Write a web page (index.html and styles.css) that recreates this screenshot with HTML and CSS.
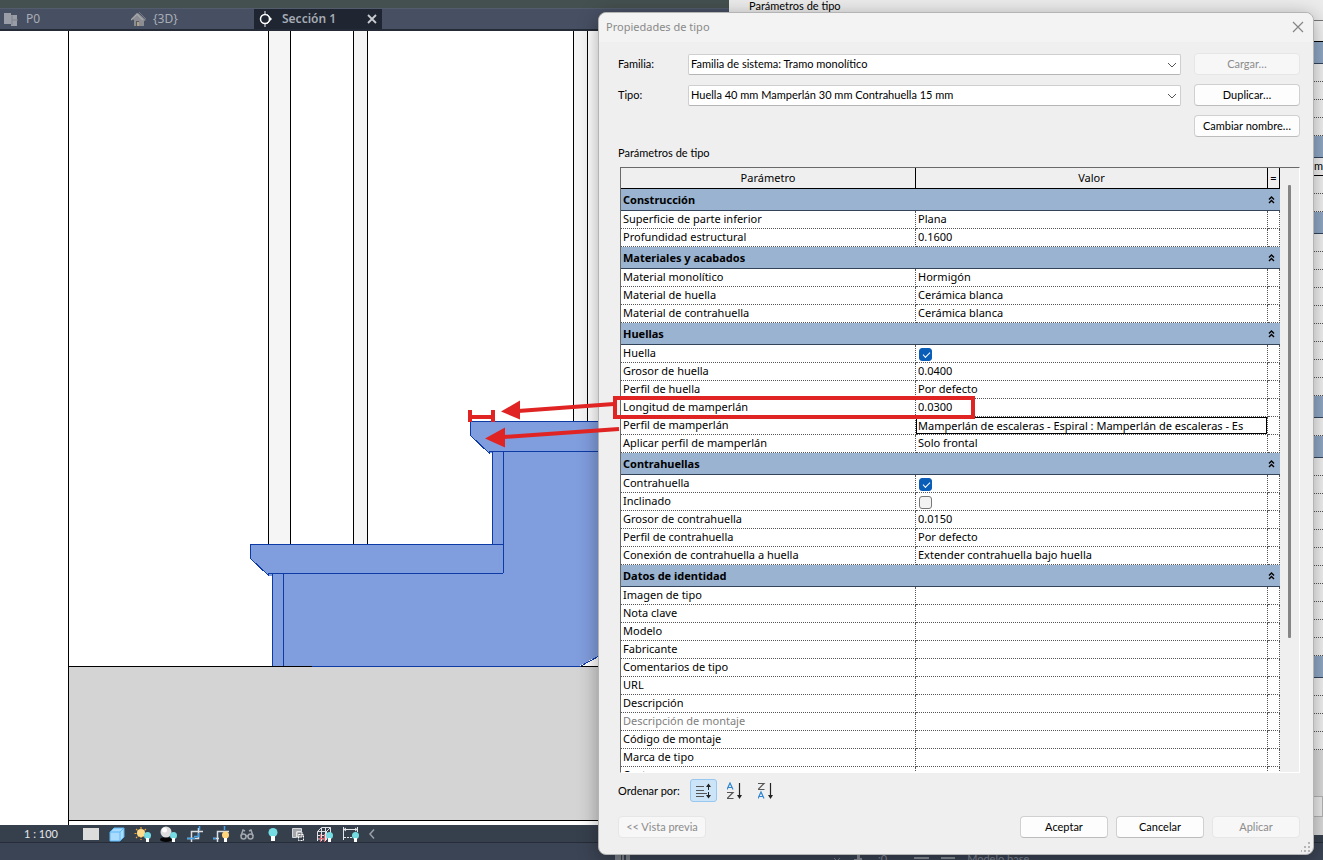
FILE: index.html
```html
<!DOCTYPE html>
<html lang="es">
<head>
<meta charset="utf-8">
<title>Propiedades de tipo</title>
<link rel="stylesheet" href="styles.css">
</head>
<body>
<div class="app">
  <div class="ribbon"></div>
  <nav class="tabs">
    <a class="tab" href="#p0">
      <svg width="16" height="16" viewBox="0 0 16 16"><path d="M0 2h7v2h6v11H7v-2H0z" fill="#9a9da5"/><path d="M8 4.500v9M8 9h6" stroke="#7d818c"/></svg>
      <span>P0</span>
    </a>
    <a class="tab" href="#3d">
      <svg width="16" height="16" viewBox="0 0 16 16"><path d="M1 8l6-6 8 7-2 1v5H3V9z" fill="#8b8d93"/><path d="M0 9l6-6 6 6" fill="none" stroke="#a5a6aa" stroke-width="1.500"/><path d="M8 1l7 7" stroke="#707580"/><path d="M5 10h3v5H5z" fill="#5c5a55"/><path d="M6 11h2v4H6z" fill="#aaa28c"/></svg>
      <span>{3D}</span>
    </a>
    <a class="tab tab-active" href="#seccion">
      <svg width="18" height="16" viewBox="0 0 18 16"><path d="M7 0v16" stroke="#eee"/><path d="M9 3l5 5-5 5z" fill="#fff"/><circle cx="7" cy="8" r="4.500" fill="#1f2631" stroke="#fff" stroke-width="1.500"/></svg>
      <span>Sección 1</span>
      <svg class="tab-close" width="10" height="10" viewBox="0 0 10 10"><path d="M1 1l8 8M9 1L1 9" stroke="#c9ccd1" stroke-width="1.800"/></svg>
    </a>
  </nav>

  <main class="canvas">
    <svg class="drawing" width="100%" height="100%">
      <g transform="translate(0 -31)" shape-rendering="crispEdges">
        <path d="M268 31h23v513h-23zM353 31h15v513h-15zM573 31h15v390h-15z" fill="#f5f5f5"/>
        <path d="M268.500 31v513M290.500 31v513M353.500 31v513M367.500 31v513M573.500 31v390M587.500 31v390" stroke="#000"/>
        <rect x="69" y="667" width="100%" height="153" fill="#d4d4d4"/>
        <path d="M68.500 31v794M68 666.500h1255M68 820.500h1255" stroke="#000"/>
        <path d="M470 421h270v160L579 666H272v-90h-4l-18-18v-14h242v-91h-2l-20-18z" fill="#809ddd"/>
        <path d="M700 421.500H470.500v14l19 18v-2H700M492.500 451v93M503.500 451v122M503 544.500H250.500v14l18 17v-2H503M272.500 573v93M283.500 573v93M312 666.500h268l60-33" fill="none" stroke="#0d3aa5"/>
      </g>
    </svg>
  </main>

  <div class="viewbar">
    <span class="scale">1 : 100</span>
    <svg viewBox="0 0 26 18"><path d="M5 3h16v12H5z" fill="#dcdcdc"/></svg>
    <svg viewBox="0 0 26 18"><path d="M6 7l4-4h10v9l-4 4H6z" fill="#a9dcff"/><path d="M6 7h10v9M16 7l4-4M6 7l4-4h10v9l-4 4H6z" fill="none" stroke="#5ab6f5"/></svg>
    <svg viewBox="0 0 26 18"><path d="M11 2v13M4.500 8.500h13M6 4l10 9M16 4L6 13" stroke="#eda83c" stroke-width="1.200" stroke-dasharray="2 1"/><circle cx="11" cy="8" r="4" fill="#ffdb8a"/><circle cx="17.500" cy="10.500" r="3.500" fill="#74dce2"/><path d="M16 13h3v4h-3z" fill="#fff"/></svg>
    <svg viewBox="0 0 26 18"><ellipse cx="10" cy="14.500" rx="6" ry="2.500" fill="#050505"/><circle cx="10" cy="7" r="5.500" fill="#dedede"/><circle cx="8.500" cy="5" r="2.500" fill="#fff"/><circle cx="17.500" cy="10.500" r="3.500" fill="#74dce2"/><path d="M16 13h3v4h-3z" fill="#fff"/></svg>
    <svg viewBox="0 0 26 18"><path d="M9.500 17V6.500H21M5 13.500h11.500V3" fill="none" stroke="#dcdfe3" stroke-width="1.500"/><path d="M5 13.500h8M12 11.500h4.500V8M17.500 1v4" fill="none" stroke="#45a5ec" stroke-width="1.500"/></svg>
    <svg viewBox="0 0 26 18"><path d="M9.500 17V6.500H21M5 13.500h6" fill="none" stroke="#dcdfe3" stroke-width="1.500"/><path d="M5 13.500h3M16.500 1v4" fill="none" stroke="#45a5ec" stroke-width="1.500"/><circle cx="17.500" cy="10" r="3.500" fill="#ffd47d"/><path d="M16 13h3v4h-3z" fill="#fff"/></svg>
    <svg viewBox="0 0 26 18"><g fill="none" stroke="#a3a6ac" stroke-width="1.500"><circle cx="9.500" cy="11.500" r="2.500"/><circle cx="16.500" cy="11.500" r="2.500"/><path d="M7 11l2-6 2 1M19 11l-2-6-2 1M12 11h2"/></g></svg>
    <svg viewBox="0 0 26 18"><circle cx="13" cy="7.500" r="4.500" fill="#74dce2"/><path d="M11 11h4v5h-4z" fill="#fff"/></svg>
    <svg viewBox="0 0 26 18"><path d="M6.500 3.500h9v3h-5v6h-4z" fill="#a4a6aa" stroke="#d5d7da"/><path d="M11 7h5v5h-5z" fill="#7c7f84" stroke="#eee"/><path d="M12.500 9.500h5v6h-5z" fill="none" stroke="#fff" stroke-dasharray="2 1"/></svg>
    <svg viewBox="0 0 26 18"><path d="M5.500 16V6.500l4-4h9V8M5.500 6.500h9l4-4M9.500 3v13M13.500 3v13M5 10.500h12M5 14h10M14.500 6v9" fill="none" stroke="#dfe1e4"/><path d="M8.500 9v8M12.500 9v8M7 13.500h6" stroke="#e2606d"/><circle cx="17.500" cy="10.500" r="3.500" fill="#74dce2"/><path d="M16 13h3v4h-3z" fill="#fff"/></svg>
    <svg viewBox="0 0 26 18"><path d="M5.500 2v13M19.500 2v5M5 4.500h15M8 3L6 4.500 8 6M17 3l2 1.500L17 6" fill="none" stroke="#e4e6e9"/><path d="M6 12.500h11" stroke="#e4e6e9" stroke-dasharray="2 1"/><circle cx="17.500" cy="10.500" r="3.500" fill="#74dce2"/><path d="M16 13h3v4h-3z" fill="#fff"/></svg>
    <svg class="more" viewBox="0 0 16 18"><path d="M10 4.500L6 9l4 4.500" fill="none" stroke="#9a9fa8" stroke-width="1.500"/></svg>
  </div>
  <div class="statusbar">
    <svg width="20" height="14" viewBox="0 0 20 14"><path d="M2 4h6v5H2zM9 4h2v9H9zM13 4h4v9h-4z" fill="#7f858e"/></svg>
    <svg class="status-caret" width="10" height="14" viewBox="0 0 10 14"><path d="M2 7l3 3 3-3" fill="none" stroke="#7f858e"/></svg>
    <svg class="status-person" width="10" height="14" viewBox="0 0 10 14"><path d="M4 3h3v4h2v3H1V8h3z" fill="#8a9098"/></svg>
    <span class="status-count">:0</span>
    <svg class="status-icons" width="44" height="14" viewBox="0 0 44 14"><path d="M1 7h15M1 11h15M28 7h14M32 11h10" stroke="#8a9098" stroke-width="2"/></svg>
    <span>Modelo base</span>
  </div>
</div>

<section class="back-window">
  <h2 class="back-title">Parámetros de tipo</h2>
  <div class="back-table">
    <div class="b-head"></div>
    <div class="b-group"></div><div class="b-row"></div><div class="b-row"></div><div class="b-row"></div><div class="b-row"></div>
    <div class="b-group"></div><div class="b-row b-selected">m</div><div class="b-row"></div><div class="b-row"></div>
    <div class="b-group"></div><div class="b-row"></div><div class="b-row"></div><div class="b-row"></div><div class="b-row"></div><div class="b-row"></div><div class="b-row"></div><div class="b-row"></div><div class="b-row"></div><div class="b-row"></div>
    <div class="b-group"></div><div class="b-row"></div>
    <div class="b-group"></div><div class="b-row"></div><div class="b-row"></div><div class="b-row"></div><div class="b-row"></div><div class="b-row"></div><div class="b-row"></div><div class="b-row"></div><div class="b-row"></div><div class="b-row"></div><div class="b-row"></div><div class="b-row"></div>
    <div class="b-group"></div><div class="b-row"></div><div class="b-row"></div><div class="b-row"></div><div class="b-row"></div>
  </div>
  <div class="back-foot"><div class="back-strip"></div></div>
</section>

<section class="dialog" role="dialog" aria-labelledby="dlg-title">
  <header class="titlebar">
    <h1 id="dlg-title">Propiedades de tipo</h1>
    <button class="close" type="button" aria-label="Cerrar"><svg width="12" height="12" viewBox="0 0 12 12"><path d="M1 1l10 10M11 1L1 11" stroke="#858585" stroke-width="1.200"/></svg></button>
  </header>
  <form class="body">
    <div class="fields">
      <label for="familia">Familia:</label>
      <div class="combo">
        <select id="familia"><option>Familia de sistema: Tramo monolítico</option></select>
        <svg width="10" height="6" viewBox="0 0 10 6"><path d="M1 1l4 4 4-4" fill="none" stroke="#555"/></svg>
      </div>
      <button class="btn" type="button" disabled>Cargar…</button>
      <label for="tipo">Tipo:</label>
      <div class="combo">
        <select id="tipo"><option>Huella 40 mm Mamperlán 30 mm Contrahuella 15 mm</option></select>
        <svg width="10" height="6" viewBox="0 0 10 6"><path d="M1 1l4 4 4-4" fill="none" stroke="#555"/></svg>
      </div>
      <button class="btn" type="button">Duplicar…</button>
      <button class="btn rename" type="button">Cambiar nombre…</button>
    </div>

    <div class="caption" id="params">Parámetros de tipo</div>
    <div class="grid-box">
      <div class="grid-view">
      <table class="grid" aria-labelledby="params">
        <colgroup><col class="c-param"><col><col class="c-eq"></colgroup>
        <thead><tr><th>Parámetro</th><th>Valor</th><th class="eq">=</th></tr></thead>
        <tbody>
          <tr class="group"><th colspan="2">Construcción</th><td><button type="button" aria-label="Contraer Construcción"><svg width="7" height="8" viewBox="0 0 7 8"><path d="M1 3.500l2.500-2.500L6 3.500M1 7l2.500-2.500L6 7" fill="none" stroke="#000" stroke-width="1.400"/></svg></button></td></tr>
          <tr><td>Superficie de parte inferior</td><td>Plana</td><td></td></tr>
          <tr><td>Profundidad estructural</td><td>0.1600</td><td></td></tr>
          <tr class="group"><th colspan="2">Materiales y acabados</th><td><button type="button" aria-label="Contraer Materiales y acabados"><svg width="7" height="8" viewBox="0 0 7 8"><path d="M1 3.500l2.500-2.500L6 3.500M1 7l2.500-2.500L6 7" fill="none" stroke="#000" stroke-width="1.400"/></svg></button></td></tr>
          <tr><td>Material monolítico</td><td>Hormigón</td><td></td></tr>
          <tr><td>Material de huella</td><td>Cerámica blanca</td><td></td></tr>
          <tr><td>Material de contrahuella</td><td>Cerámica blanca</td><td></td></tr>
          <tr class="group"><th colspan="2">Huellas</th><td><button type="button" aria-label="Contraer Huellas"><svg width="7" height="8" viewBox="0 0 7 8"><path d="M1 3.500l2.500-2.500L6 3.500M1 7l2.500-2.500L6 7" fill="none" stroke="#000" stroke-width="1.400"/></svg></button></td></tr>
          <tr><td><label for="huella">Huella</label></td><td><input id="huella" type="checkbox" checked></td><td></td></tr>
          <tr><td>Grosor de huella</td><td>0.0400</td><td></td></tr>
          <tr><td>Perfil de huella</td><td>Por defecto</td><td></td></tr>
          <tr><td>Longitud de mamperlán</td><td>0.0300</td><td></td></tr>
          <tr><td><label for="perfil">Perfil de mamperlán</label></td><td class="editing"><input id="perfil" type="text" value="Mamperlán de escaleras - Espiral : Mamperlán de escaleras - Es"></td><td></td></tr>
          <tr><td>Aplicar perfil de mamperlán</td><td>Solo frontal</td><td></td></tr>
          <tr class="group"><th colspan="2">Contrahuellas</th><td><button type="button" aria-label="Contraer Contrahuellas"><svg width="7" height="8" viewBox="0 0 7 8"><path d="M1 3.500l2.500-2.500L6 3.500M1 7l2.500-2.500L6 7" fill="none" stroke="#000" stroke-width="1.400"/></svg></button></td></tr>
          <tr><td><label for="contrahuella">Contrahuella</label></td><td><input id="contrahuella" type="checkbox" checked></td><td></td></tr>
          <tr><td><label for="inclinado">Inclinado</label></td><td><input id="inclinado" type="checkbox"></td><td></td></tr>
          <tr><td>Grosor de contrahuella</td><td>0.0150</td><td></td></tr>
          <tr><td>Perfil de contrahuella</td><td>Por defecto</td><td></td></tr>
          <tr><td>Conexión de contrahuella a huella</td><td>Extender contrahuella bajo huella</td><td></td></tr>
          <tr class="group"><th colspan="2">Datos de identidad</th><td><button type="button" aria-label="Contraer Datos de identidad"><svg width="7" height="8" viewBox="0 0 7 8"><path d="M1 3.500l2.500-2.500L6 3.500M1 7l2.500-2.500L6 7" fill="none" stroke="#000" stroke-width="1.400"/></svg></button></td></tr>
          <tr><td>Imagen de tipo</td><td></td><td></td></tr>
          <tr><td>Nota clave</td><td></td><td></td></tr>
          <tr><td>Modelo</td><td></td><td></td></tr>
          <tr><td>Fabricante</td><td></td><td></td></tr>
          <tr><td>Comentarios de tipo</td><td></td><td></td></tr>
          <tr><td>URL</td><td></td><td></td></tr>
          <tr><td>Descripción</td><td></td><td></td></tr>
          <tr><td class="muted">Descripción de montaje</td><td></td><td></td></tr>
          <tr><td>Código de montaje</td><td></td><td></td></tr>
          <tr><td>Marca de tipo</td><td></td><td></td></tr>
          <tr><td>Coste</td><td></td><td></td></tr>
        </tbody>
      </table>
      </div>
      <div class="scroll"><div class="thumb"></div></div>
    </div>

    <div class="sort">
      <span class="sort-label">Ordenar por:</span>
      <button class="sort-btn sort-on" type="button" aria-label="Orden por defecto"><svg width="16" height="16" viewBox="1 0 16 16"><path d="M1 3.500h8M1 7.500h8M1 10.500h11M1 13.500h8" stroke="#555"/><path d="M13.500 1v6M13.500 9v6" stroke="#222"/><path d="M11 4l2.500-3.500L16 4zM11 12l2.500 3.500L16 12z" fill="#222"/></svg></button>
      <button class="sort-btn" type="button" aria-label="Orden ascendente"><svg width="16" height="18" viewBox="1 0 16 18"><path d="M1 7.500l3-6.500 3 6.500M2 5.500h4" fill="none" stroke="#2f86d0" stroke-width="1.200"/><path d="M1 10.500h6l-6 6h6.500" fill="none" stroke="#555" stroke-width="1.200"/><path d="M13.500 1v14" stroke="#222" stroke-width="1.200"/><path d="M11 13h5l-2.500 4z" fill="#222"/></svg></button>
      <button class="sort-btn" type="button" aria-label="Orden descendente"><svg width="16" height="18" viewBox="1 0 16 18"><path d="M1 1.500h6l-6 6h6.500" fill="none" stroke="#555" stroke-width="1.200"/><path d="M1 16.500l3-6.500 3 6.500M2 14.500h4" fill="none" stroke="#2f86d0" stroke-width="1.200"/><path d="M13.500 1v14" stroke="#222" stroke-width="1.200"/><path d="M11 13h5l-2.500 4z" fill="#222"/></svg></button>
    </div>

    <div class="actions">
      <button class="btn preview" type="button" disabled>&lt;&lt; Vista previa</button>
      <button class="btn" type="button">Aceptar</button>
      <button class="btn" type="button">Cancelar</button>
      <button class="btn" type="button" disabled>Aplicar</button>
    </div>
  </form>
  <svg class="grip" width="10" height="10" viewBox="0 0 10 10"><path d="M7 0h2v2H7zM7 4h2v2H7zM7 8h2v2H7zM3 4h2v2H3zM3 8h2v2H3zM0 8h1v2H0z" fill="#b5b5b5"/></svg>
</section>

<svg class="notes" width="1323" height="860" viewBox="0 0 1323 860">
  <g fill="none" stroke="#e02424">
    <path d="M615 398h358v19h-358z" stroke-width="4"/>
    <path d="M614 404l-96 7M619 429l-115 8" stroke-width="4"/>
    <path d="M470 410v12M493 410v12M470 417h23" stroke-width="4"/>
  </g>
  <path d="M501 411.500l19-11v19zM485 438.500l20-11v20z" fill="#e02424"/>
</svg>
</body>
</html>
```
FILE: styles.css
```css
* { box-sizing: border-box; }
html, body { height: 100%; }
body {
  margin: 0;
  position: relative;
  overflow: hidden;
  background: #3a4352;
  color: #000;
  font: 11px/16px Lato, "Liberation Sans", sans-serif;
}
button, input, select { font: inherit; color: inherit; }
svg { display: block; }

/* application window */
.app { height: 100%; min-height: 600px; display: flex; flex-direction: column; }
.ribbon { height: 8px; background: #44504f; }
.tabs {
  display: flex;
  height: 23px;
  background: #475063;
  border-top: 1px solid #525c6c;
  border-bottom: 2px solid #252b36;
  font: 12px/20px "Noto Sans", sans-serif;
}
.tab {
  display: flex;
  align-items: center;
  gap: 6px;
  width: 127px;
  padding: 0 5px 0 4px;
  color: #a9adb6;
  text-decoration: none;
}
.tab-active { width: 128px; background: #1f2631; font-weight: 600; color: #a6abb4; }
.tab-close { margin-left: auto; }
.canvas { flex: 1; min-height: 0; overflow: hidden; background: #fff; }
.viewbar {
  display: flex;
  align-items: center;
  height: 18px;
  background: #36404d;
  border-bottom: 1px solid #262d38;
  color: #e4e6e9;
}
.scale { width: 78px; padding-left: 24px; }
.viewbar svg { width: 26px; height: 18px; }
.viewbar .more { width: 16px; }
.statusbar {
  display: flex;
  height: 17px;
  padding: 8px 0 0 613px;
  overflow: hidden;
  background: #3b4454;
  color: #858c98;
}
.status-caret { margin-left: 199px; }
.status-person { margin-left: 11px; }
.status-count { margin-left: 15px; }
.status-icons { margin: 0 10px 0 26px; }

/* dialog behind */
.back-window {
  position: absolute;
  top: 0;
  left: 729px;
  right: 0;
  bottom: 25px;
  display: flex;
  flex-direction: column;
  background: #ececec;
}
.back-title { margin: 0; padding: 0 20px; height: 20px; font-size: 11px; font-weight: 400; line-height: 12px; }
.back-table { background: #f3f3f3; border-top: 1px solid #777; text-align: right; }
.b-head { height: 21px; border-bottom: 1px solid #000; }
.b-group { height: 22px; background: #91a9c6; border-bottom: 1px solid #33445a; }
.b-row { height: 18px; border-bottom: 1px dotted #555; }
.b-selected { border-bottom: 1px solid #000; }
.back-foot { flex: 1; padding-top: 46px; background: #dcdcdc; }
.back-strip { height: 21px; background: #ececec; border: 1px solid #b5b5b5; }

/* dialog */
.dialog {
  position: absolute;
  top: 12px;
  left: 598px;
  right: 9px;
  bottom: 5px;
  display: flex;
  flex-direction: column;
  background: #efefef;
  border: 1px solid #b4b4b4;
  border-radius: 8px;
  box-shadow: 0 4px 20px rgba(0, 0, 0, 0.35);
}
.titlebar {
  display: flex;
  align-items: center;
  justify-content: space-between;
  height: 29px;
  padding: 0 9px 2px 7px;
  background: #f3f3f3;
  border-radius: 8px 8px 0 0;
}
.titlebar h1 { margin: 0; font: 400 11px/16px "Noto Sans", sans-serif; color: #8a8a8a; }
.close { padding: 0; border: 0; background: none; }
.body {
  flex: 1;
  min-height: 0;
  display: flex;
  flex-direction: column;
  padding: 11px 13px 16px 19px;
}
.fields {
  display: grid;
  grid-template-columns: 70px 1fr 106px;
  grid-auto-rows: 22px;
  row-gap: 9px;
  align-items: center;
}
.rename { grid-column: 3; }
.combo { position: relative; margin-right: 13px; }
.combo select {
  display: block;
  width: 100%;
  height: 21px;
  padding: 0 20px 0 2px;
  appearance: none;
  background: #fff;
  border: 1px solid #cfcfcf;
  border-bottom-color: #b5b5b5;
  border-radius: 2px;
}
.combo svg { position: absolute; right: 4px; top: 8px; pointer-events: none; }
.btn {
  height: 22px;
  padding: 0 6px;
  background: #fdfdfd;
  border: 1px solid #d0d0d0;
  border-bottom-color: #bcbcbc;
  border-radius: 4px;
}
.btn:disabled { color: #8c8c8c; background: #f7f7f7; border-color: #e6e6e6; }
.caption { margin: 8px 0 6px; }
.grid-box {
  flex: 1;
  min-height: 0;
  display: flex;
  margin-left: 2px;
  border: 1px solid;
  border-color: #696969 #fff #fff #696969;
}
.grid-view { flex: 1; overflow: hidden; background: #fff; }
.scroll { width: 19px; padding: 17px 8px 0 8px; }
.thumb { height: 453px; background: #858585; border-radius: 1px; }

.grid {
  width: 100%;
  table-layout: fixed;
  border-spacing: 0;
  font: 11px/15px "Noto Sans", sans-serif;
}
.c-param { width: 295px; }
.c-eq { width: 12px; }
.grid td, .grid th {
  height: 18px;
  padding: 0 2px;
  border: 0 dotted #555;
  border-width: 0 1px 1px 0;
  text-align: left;
  vertical-align: top;
  white-space: nowrap;
}
.grid thead th {
  height: 21px;
  padding-top: 2px;
  background: #efefef;
  border: 0 solid #000;
  border-width: 0 1px 1px 0;
  font-weight: 400;
  text-align: center;
}
.grid .group th, .grid .group td {
  height: 22px;
  background: #9ab3d0;
  border: 0;
  border-bottom: 1px solid #33445a;
  vertical-align: middle;
}
.grid thead .eq { padding: 2px 0 0; }
.grid .group td { padding: 0; }
.group button { display: block; padding: 0; border: 0; background: none; }
.grid .muted { color: #808080; }
.grid .editing { padding: 0; }
.editing input {
  display: block;
  width: 100%;
  height: 17px;
  padding: 0 1px 1px;
  border: 1px solid #000;
  background: #fff;
}
.grid input[type="checkbox"] {
  display: block;
  width: 13px;
  height: 13px;
  margin: 3px 0 0 1px;
  appearance: none;
  background: #f3f3f3;
  border: 1px solid #777;
  border-radius: 3px;
}
.grid input[type="checkbox"]:checked { background: #0a5eb8; border-color: #0a5eb8; }
.grid input[type="checkbox"]:checked::after {
  content: "";
  display: block;
  width: 6px;
  height: 3px;
  margin: 3px 0 0 3px;
  border: solid #fff;
  border-width: 0 0 1px 1px;
  transform: rotate(-45deg);
}

.sort { display: flex; align-items: center; gap: 4px; margin-top: 6px; }
.sort-label { width: 68px; }
.sort-btn {
  display: grid;
  place-items: center;
  width: 27px;
  height: 23px;
  padding: 0;
  border: 1px solid transparent;
  border-radius: 3px;
  background: none;
}
.sort-on { background: #cce4f7; border-color: #98c8ef; }
.actions { display: flex; gap: 8px; margin-top: 14px; }
.actions .btn { width: 88px; }
.actions .preview { margin-right: auto; padding: 0; }
.grip { position: absolute; right: 2px; bottom: 2px; }

/* red mark-up over the windows */
.notes { position: absolute; top: 0; left: 0; pointer-events: none; }
```
